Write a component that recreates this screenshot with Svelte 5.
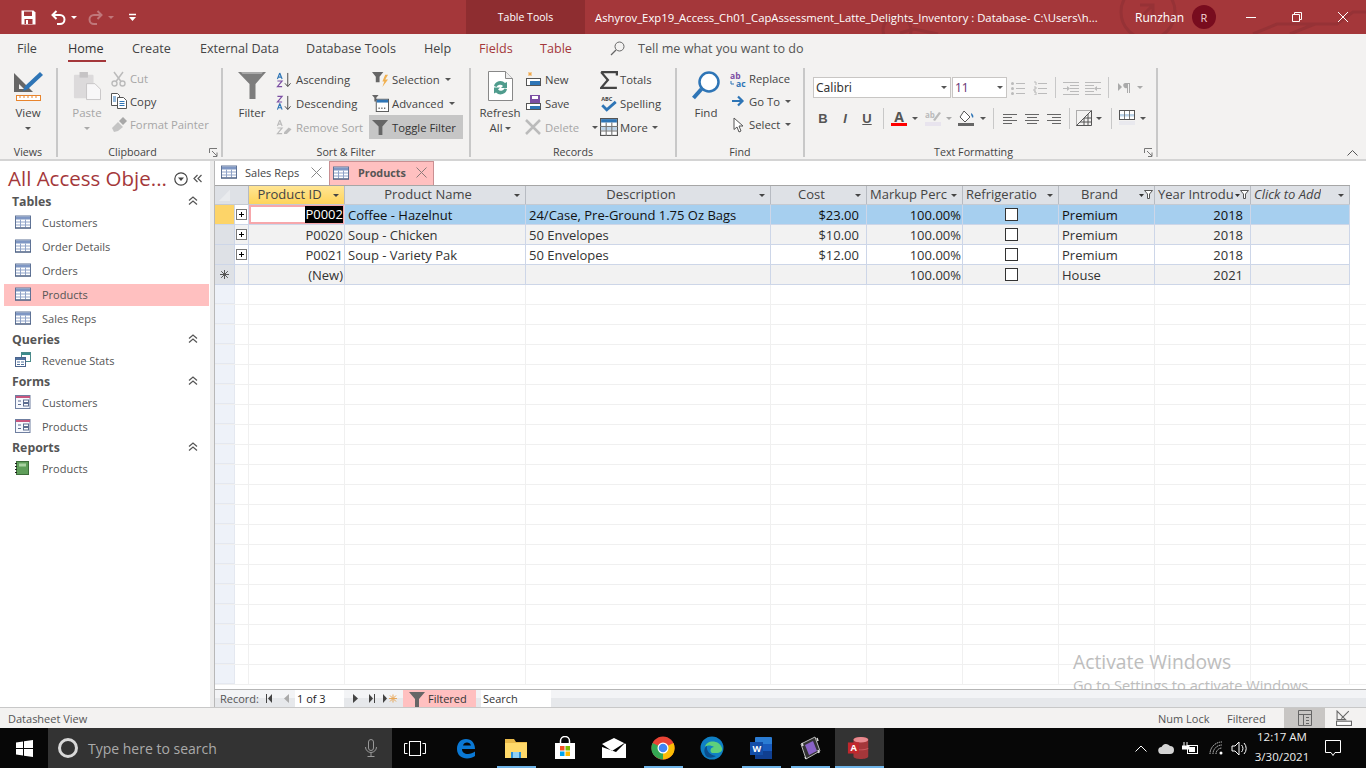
<script>
  const tabs = [
    ['File','t-file'],['Home','t-home active'],['Create','t-create'],['External Data','t-ext'],['Database Tools','t-db'],['Help','t-help'],['Fields','t-fields red'],['Table','t-table red']
  ];
  const nav = [
    { h:'Tables', items:[['Customers','t'],['Order Details','t'],['Orders','t'],['Products','t',true],['Sales Reps','t']] },
    { h:'Queries', items:[['Revenue Stats','q']] },
    { h:'Forms', items:[['Customers','f'],['Products','f']] },
    { h:'Reports', items:[['Products','r']] }
  ];
  const cols = [
    ['Product ID','c','hsel'],['Product Name','c'],['Description','c'],['Cost','c'],['Markup Perc','l'],['Refrigeratio','l'],['Brand','c','','f'],['Year Introdu','l','','f'],['Click to Add','i']
  ];
  const rows = [
    { cur:true, mark:'cur', exp:true, id:'P0002', name:'Coffee - Hazelnut', desc:'24/Case, Pre-Ground 1.75 Oz Bags', cost:'$23.00', brand:'Premium', yr:'2018' },
    { alt:true, exp:true, id:'P0020', name:'Soup - Chicken', desc:'50 Envelopes', cost:'$10.00', brand:'Premium', yr:'2018' },
    { exp:true, id:'P0021', name:'Soup - Variety Pak', desc:'50 Envelopes', cost:'$12.00', brand:'Premium', yr:'2018' },
    { alt:true, mark:'new', id:'(New)', name:'', desc:'', cost:'', brand:'House', yr:'2021' }
  ];
  const blanks = Array.from({length:20},(_, i)=>i);
</script>

{#snippet tableIcon()}
  <svg class="ico16" viewBox="0 0 16 13"><rect x=".5" y=".5" width="15" height="12" fill="#fff" stroke="#5f7396"/><rect x="1" y="1" width="14" height="3" fill="#7f97c4"/><path d="M1 6.5h14M1 9.5h14M5.5 4v8M10.5 4v8" stroke="#8fa3c8" fill="none"/><path d="M0 12.5h16" stroke="#44587a"/></svg>
{/snippet}
{#snippet navIcon(k)}
  {#if k==='t'}
    {@render tableIcon()}
  {:else if k==='q'}
    <svg class="ico16" viewBox="0 0 16 16"><rect x="6.5" y=".5" width="9" height="9" fill="#fff" stroke="#4a8a8a"/><rect x="7" y="1" width="8" height="2" fill="#3c8c8c"/><rect x=".5" y="5.5" width="10" height="9" fill="#fff" stroke="#4c648c"/><rect x="1" y="6" width="9" height="2" fill="#51729f"/><path d="M2 10h3M6 10h3M2 12.500h3M6 12.500h3" stroke="#51729f"/></svg>
  {:else if k==='f'}
    <svg class="ico16" viewBox="0 0 16 14"><rect x=".5" y=".5" width="14.500" height="13" fill="#f6f8fd" stroke="#6f7fa0"/><rect x="1" y="1" width="14" height="2" fill="#c8567f"/><path d="M3 6h3M3 9.500h3" stroke="#5d6d90"/><rect x="8.500" y="5" width="5" height="2.500" fill="#fff" stroke="#5d6d90"/><rect x="8.500" y="8.500" width="5" height="2.500" fill="#fff" stroke="#5d6d90"/></svg>
  {:else}
    <svg class="ico16" viewBox="0 0 16 14"><rect x="1.500" y=".5" width="12" height="13" fill="#5f9e5a" stroke="#3d6d3a"/><rect x="4" y="2.500" width="7" height="3" fill="#a9d3a2"/><path d="M1 2v1M1 5v1M1 8v1M1 11v1" stroke="#222" stroke-width="2" fill="none"/></svg>
  {/if}
{/snippet}
{#snippet funnel(c)}
  <svg class="fun" viewBox="0 0 16 16"><path d="M0 1h16L10 8v8H6V8z" fill={c}/></svg>
{/snippet}
{#snippet chev2()}
  <svg class="chev" viewBox="0 0 10 10"><path d="M1 4.500l4-3.500 4 3.500M1 8.500l4-3.500 4 3.500" fill="none" stroke="#555" stroke-width="1.200"/></svg>
{/snippet}
{#snippet launcher()}
  <svg class="launch" viewBox="0 0 9 9"><path d="M.5 5V.5H8M3 3l5 5M8 4.500V8.500H4" fill="none" stroke="#777"/></svg>
{/snippet}
{#snippet lines(a,c)}
  <svg class="ico14" viewBox="0 0 14 14">
    {#if a==='l'}<path d="M0 3.500h14M0 6.500h9M0 9.500h14M0 12.500h9" stroke={c}/>
    {:else if a==='c'}<path d="M0 3.500h14M2 6.500h10M0 9.500h14M2 12.500h10" stroke={c}/>
    {:else}<path d="M0 3.500h14M5 6.500h9M0 9.500h14M5 12.500h9" stroke={c}/>{/if}
  </svg>
{/snippet}

<div class="app">
  <header class="title">
    <svg class="pattern" viewBox="0 0 1366 34" aria-hidden="true">
      <g fill="none" stroke="#963236" stroke-width="3">
        <circle cx="1148" cy="12" r="27"/><path d="M1140 5h13v13M1153 5l-16 16"/>
        <circle cx="897" cy="30" r="14"/><path d="M900 33l14-4 24 5M1253 34l24-10h60l16-12h13M1290 34l25-10"/>
      </g>
    </svg>
    <div class="qat">
      <svg class="q-save" viewBox="0 0 15 15"><path d="M.5.5h12l2 2v12H.5z" fill="#fff"/><rect x="3" y="1.500" width="8" height="4.500" fill="#a4373a"/><rect x="3.500" y="9" width="8" height="5" fill="#a4373a"/><rect x="5" y="10" width="2" height="4" fill="#fff"/></svg>
      <svg class="q-undo" viewBox="0 0 15 15"><path d="M5.500 1L1.500 5l4 4M2 5h7a4.500 4.500 0 0 1 0 9H6" fill="none" stroke="#fff" stroke-width="2"/></svg>
      <span class="qc w"></span>
      <svg class="q-redo" viewBox="0 0 15 15"><path d="M9.500 1l4 4-4 4M13 5H6a4.500 4.500 0 0 0 0 9h3" fill="none" stroke="#c0777a" stroke-width="2"/></svg>
      <span class="qc d"></span>
      <svg class="q-more" viewBox="0 0 7 9"><path d="M0 1.500h7" stroke="#fff" stroke-width="1.500"/><path d="M0 4h7L3.500 8z" fill="#fff"/></svg>
    </div>
    <div class="tt">Table Tools</div>
    <div class="doc">Ashyrov_Exp19_Access_Ch01_CapAssessment_Latte_Delights_Inventory : Database- C:\Users\h...</div>
    <div class="user">Runzhan</div>
    <div class="avatar">R</div>
    <div class="win">
      <svg viewBox="0 0 10 10"><path d="M0 5.500h10" stroke="#fff"/></svg>
      <svg viewBox="0 0 10 10"><path d="M.5 2.500h7v7h-7zM2.500 2.500v-2h7v7h-2" fill="none" stroke="#fff"/></svg>
      <svg viewBox="0 0 10 10"><path d="M0 0l10 10M10 0L0 10" stroke="#fff"/></svg>
    </div>
  </header>

  <nav class="tabs">
    {#each tabs as t}<span class={t[1]}>{t[0]}</span>{/each}
    <svg class="tellico" viewBox="0 0 15 15"><circle cx="9.500" cy="5.500" r="4.500" fill="none" stroke="#666"/><path d="M6 9l-5 5" stroke="#666" stroke-width="1.300"/></svg>
    <span class="tell">Tell me what you want to do</span>
  </nav>

  <section class="ribbon">
    <div class="grp g-views">
      <div class="gbody">
        <div class="big b-view">
          <svg class="bigico" viewBox="0 0 30 30"><path d="M1 2v19h19z" fill="#666"/><path d="M6 13v5h5z" fill="#f3f2f1"/><path d="M12 15L27 1l3 3-15 14-5 2z" fill="#2e75b6"/><rect x="3.500" y="24.500" width="24" height="5" fill="#fff" stroke="#e8842c"/><path d="M7 25v2M11 25v2M15 25v2M19 25v2M23 25v2" stroke="#e8842c"/></svg>
          <span>View</span><i class="caret"></i>
        </div>
      </div>
      <div class="glabel">Views</div>
    </div>

    <div class="grp g-clip">
      <div class="gbody">
        <div class="big b-paste dis">
          <svg class="bigico" viewBox="0 0 30 30"><rect x="1" y="3" width="21" height="25" rx="1" fill="#dcdadb"/><rect x="7" y="0" width="9" height="6" fill="#c6c4c5"/><path d="M14.500 12.500h9l6 6v11h-15z" fill="#f8f7f8" stroke="#c6c4c5"/></svg>
          <span>Paste</span><i class="caret lt"></i>
        </div>
        <div class="col clipcol r23">
          <div class="sm dis"><svg class="ico16" viewBox="0 0 16 16"><circle cx="3.500" cy="12.500" r="2.500" fill="none" stroke="#bbb" stroke-width="1.400"/><circle cx="11.500" cy="12.500" r="2.500" fill="none" stroke="#bbb" stroke-width="1.400"/><path d="M5 10.500L12 1M10 10.500L3 1" stroke="#bbb" stroke-width="1.500"/></svg><span>Cut</span></div>
          <div class="sm"><svg class="ico16" viewBox="0 0 16 16"><path d="M.5.5h6l2 2v10h-8z" fill="#fff" stroke="#555"/><path d="M6.500 4.500h6l3 3v8h-9z" fill="#fff" stroke="#555"/><path d="M8.500 8.500h5M8.500 10.500h5M8.500 12.500h5M2 4h3M2 6h3M2 8h3" stroke="#2e75b6"/></svg><span>Copy</span></div>
          <div class="sm dis"><svg class="ico16" viewBox="0 0 16 16"><path d="M1 11l6-6 5 5-5 4-4 1z" fill="#c4c4c4"/><path d="M8 4l4-4 4 4-4 4z" fill="#a8a8a8"/></svg><span>Format Painter</span></div>
        </div>
      </div>
      <div class="glabel">Clipboard</div>
      <div class="launchwrap">{@render launcher()}</div>
    </div>

    <div class="grp g-sort">
      <div class="gbody">
        <div class="big b-filter">
          <svg class="bigico" viewBox="0 0 28 28"><path d="M0 0h28L17.500 12v15h-6V12z" fill="#7d7d7d"/><path d="M3 0h22l-1.500 2h-19z" fill="#a9a9a9"/></svg>
          <span>Filter</span>
        </div>
        <div class="col sortcol1 r24">
          <div class="sm az"><svg class="ico16" viewBox="0 0 16 17"><path d="M12 1v14M9 12l3 3.500 3-3.500" fill="none" stroke="#444"/><path d="M3.500 1L1 7.500M3.500 1L6 7.500M2 5.500h3" fill="none" stroke="#2e75b6" stroke-width="1.200"/><path d="M1 9.500h5L1 15.500h5" fill="none" stroke="#7b4ea3" stroke-width="1.200"/></svg><span>Ascending</span></div>
          <div class="sm az"><svg class="ico16" viewBox="0 0 16 17"><path d="M12 1v14M9 12l3 3.500 3-3.500" fill="none" stroke="#444"/><path d="M1 1.500h5L1 7.500h5" fill="none" stroke="#7b4ea3" stroke-width="1.200"/><path d="M3.500 9L1 15.500M3.500 9L6 15.500M2 13.500h3" fill="none" stroke="#2e75b6" stroke-width="1.200"/></svg><span>Descending</span></div>
          <div class="sm az dis"><svg class="ico16" viewBox="0 0 16 17"><path d="M3.500 1L1 7.500M3.500 1L6 7.500M2 5.500h3M1 9.500h5L1 15.500h5" fill="none" stroke="#bbb" stroke-width="1.200"/><path d="M8 14l5-5 3 2-5 5H8z" fill="#bbb"/></svg><span>Remove Sort</span></div>
        </div>
        <div class="col sortcol2 r24">
          <div class="sm"><svg class="ico16 wide" viewBox="0 0 18 18"><path d="M0 1h12L8 6v6H4V6z" fill="#666"/><path d="M14 4h3l-3 5h3l-6 8 2-6h-2z" fill="#f0b050"/></svg><span>Selection</span><i class="caret s"></i></div>
          <div class="sm"><svg class="ico16 wide" viewBox="0 0 18 18"><path d="M0 0h7L4.500 3v4h-2V3z" fill="#666"/><rect x="4.500" y="4.500" width="13" height="13" fill="#fff" stroke="#555"/><rect x="5" y="5" width="12" height="3" fill="#2e75b6"/><path d="M7 14h1M10 14h1M13 14h1" stroke="#333" stroke-width="1.500"/></svg><span>Advanced</span><i class="caret s"></i></div>
          <div class="sm on"><svg class="ico16 wide" viewBox="0 0 18 16"><path d="M0 0h17l-6 7v9H7V7z" fill="#666"/></svg><span>Toggle Filter</span></div>
        </div>
      </div>
      <div class="glabel">Sort &amp; Filter</div>
    </div>

    <div class="grp g-rec">
      <div class="gbody">
        <div class="big b-refresh">
          <svg class="bigico" viewBox="0 0 26 30"><path d="M1.500.5h17l7 7v22H1.500z" fill="#fff" stroke="#888"/><path d="M18.500.5v7h7" fill="#eee" stroke="#888"/><path d="M7 15a6.500 6.500 0 0 1 11-3l2-1v6h-6l2-2a4 4 0 0 0-6.500 1zM20 18a6.500 6.500 0 0 1-11 3.500l-2 1v-6h6l-2 2a4 4 0 0 0 6.500-1z" fill="#4f9c8d"/></svg>
          <span>Refresh</span><span class="all">All<i class="caret s"></i></span>
        </div>
        <div class="col reccol1 r24">
          <div class="sm gap4"><svg class="ico16" viewBox="0 0 16 16"><path d="M5 0v4M3 2h4M3.500 .5l3 3M6.500 .5l-3 3" stroke="#f0a84a"/><rect x="1.500" y="6.500" width="14" height="7" fill="#fff" stroke="#555"/><rect x="5" y="9" width="10" height="4" fill="#2e75b6"/></svg><span>New</span></div>
          <div class="sm gap4"><svg class="ico16" viewBox="0 0 16 16"><rect x="5" y="0" width="10" height="10" fill="#7b4ea3"/><rect x="7" y="1" width="6" height="3" fill="#fff"/><rect x="1.500" y="8.500" width="14" height="6" fill="#fff" stroke="#555"/><rect x="5" y="11" width="10" height="3" fill="#2e75b6"/></svg><span>Save</span></div>
          <div class="sm gap4 dis"><svg class="ico16" viewBox="0 0 16 16"><path d="M1 1l14 14M15 1L1 15" stroke="#bbb" stroke-width="2.500"/></svg><span>Delete</span><i class="caret s del"></i></div>
        </div>
        <div class="col reccol2 r24">
          <div class="sm gap2"><svg class="ico18" viewBox="0 0 16 16"><path d="M1 1h14v3M15 15H1l6-7-6-7" fill="none" stroke="#444" stroke-width="2"/></svg><span>Totals</span></div>
          <div class="sm gap2"><svg class="ico18" viewBox="0 0 16 16"><text x="1" y="6" class="abc">ABC</text><path d="M2 10l4 4 8-7" fill="none" stroke="#2e75b6" stroke-width="2.500"/></svg><span>Spelling</span></div>
          <div class="sm gap2"><svg class="ico18" viewBox="0 0 16 16"><rect x=".5" y=".5" width="15" height="15" fill="#fff" stroke="#555"/><rect x="1" y="1" width="14" height="3" fill="#2e75b6"/><rect x="1" y="7" width="14" height="4" fill="#bcd3e8"/><path d="M5.500 4v12M10.500 4v12M0 7.500h16M0 11.500h16" stroke="#777"/></svg><span>More</span><i class="caret s"></i></div>
        </div>
      </div>
      <div class="glabel">Records</div>
    </div>

    <div class="grp g-find">
      <div class="gbody">
        <div class="big b-find">
          <svg class="bigico" viewBox="0 0 28 30"><circle cx="17" cy="11" r="9.500" fill="#fff" stroke="#2e75b6" stroke-width="2.500"/><path d="M9.500 18L1.500 27" stroke="#2e75b6" stroke-width="4"/></svg>
          <span>Find</span>
        </div>
        <div class="col findcol r23">
          <div class="sm"><svg class="ico16" viewBox="0 0 16 16"><text x="0" y="8" class="ab">ab</text><text x="6" y="15.500" class="ac">ac</text><path d="M1 10v3h3" fill="none" stroke="#2e75b6"/></svg><span>Replace</span></div>
          <div class="sm"><svg class="ico16" viewBox="0 0 16 16"><path d="M2 8h10M8 3.500L12.500 8 8 12.500" fill="none" stroke="#2e75b6" stroke-width="2.200"/></svg><span>Go To</span><i class="caret s"></i></div>
          <div class="sm"><svg class="ico16" viewBox="0 0 16 16"><path d="M4 1v11.500l3-2.500 2 5 2-1-2-5h4z" fill="#fff" stroke="#555"/></svg><span>Select</span><i class="caret s"></i></div>
        </div>
      </div>
      <div class="glabel">Find</div>
    </div>

    <div class="grp g-text">
      <div class="gbody tf">
        <div class="tfr1">
          <div class="sel fontsel"><span>Calibri</span><i class="caret s"></i></div>
          <div class="sel sizesel"><span>11</span><i class="caret s"></i></div>
          <span class="cell"><svg class="ico14" viewBox="0 0 14 14"><path d="M5 2.500h9M5 7.500h9M5 12.500h9" stroke="#bbb"/><circle cx="1.500" cy="2.500" r="1.500" fill="#bbb"/><circle cx="1.500" cy="7.500" r="1.500" fill="#bbb"/><circle cx="1.500" cy="12.500" r="1.500" fill="#bbb"/></svg></span>
          <span class="cell"><svg class="ico14" viewBox="0 0 14 14"><path d="M5 2.500h9M5 7.500h9M5 12.500h9M1 1h2v3M1 6h2v2H1v2h2M1 11h2v3H1" fill="none" stroke="#bbb"/></svg></span>
          <span class="cell"><b class="vsep"></b></span>
          <span class="cell"><svg class="ico16" viewBox="0 0 16 14"><path d="M0 1.500h16M7 4.500h9M7 7.500h9M7 10.500h9M0 13.500h16" stroke="#bbb"/><path d="M0 7h4v-2l3 2.500L4 10V8H0z" fill="#bbb"/></svg></span>
          <span class="cell"><svg class="ico16" viewBox="0 0 16 14"><path d="M0 1.500h16M0 4.500h9M0 7.500h9M0 10.500h9M0 13.500h16" stroke="#bbb"/><path d="M16 7h-4v-2L9 7.500 12 10V8h4z" fill="#bbb"/></svg></span>
          <span class="cell"><b class="vsep"></b></span>
          <span class="cell"><svg class="ico12" viewBox="0 0 12 12"><path d="M0 1l4 4-4 4zM7 1h5v10h-1V2h-1v9H9V6a2.500 2.500 0 0 1-2-5z" fill="#aaa"/></svg></span>
          <span class="cell"><i class="caret s lt"></i></span>
        </div>
        <div class="tfr2">
          <span class="cell tb">B</span><span class="cell ti">I</span><span class="cell tu">U</span>
          <span class="cell"><b class="vsep"></b></span>
          <span class="cell fa"><span>A</span><b class="redbar"></b></span>
          <span class="cell"><i class="caret s z"></i></span>
          <span class="cell"><svg class="ico16" viewBox="0 0 16 16"><text x="0" y="8" class="abg">ab</text><path d="M8 10l6-8 2 1-6 8z" fill="#bbb"/><rect x="0" y="12" width="16" height="4" fill="#e8e4ee"/></svg></span>
          <span class="cell"><i class="caret s lt"></i></span>
          <span class="cell"><svg class="ico16" viewBox="0 0 16 16"><path d="M6 1l6 6-5 5-5-5z" fill="#fff" stroke="#555"/><path d="M13 3c2 1 3 3 2 5-1-1-2-2-2-5z" fill="#2e75b6"/><rect x="0" y="13" width="16" height="3" fill="#666"/></svg></span>
          <span class="cell"><i class="caret s z"></i></span>
          <span class="cell"><b class="vsep"></b></span>
          <span class="cell">{@render lines('l','#666')}</span>
          <span class="cell">{@render lines('c','#666')}</span>
          <span class="cell">{@render lines('r','#666')}</span>
          <span class="cell"><b class="vsep"></b></span>
          <span class="cell"><svg class="ico16" viewBox="0 0 16 16"><path d="M.5 15.500v-15h15" fill="none" stroke="#666" stroke-dasharray="1 1"/><path d="M.5 15.500L15.500 .5v15zM8 8v7.500M12 4v11.500M4 12h11.500M8 8h7.500" fill="none" stroke="#555"/></svg></span>
          <span class="cell"><i class="caret s z"></i></span>
          <span class="cell"><b class="vsep"></b></span>
          <span class="cell"><svg class="ico16" viewBox="0 0 16 16"><rect x=".5" y=".5" width="15" height="9" fill="#fff" stroke="#555"/><rect x="1" y="4" width="14" height="2.500" fill="#bcd3e8"/><path d="M5.500 1v8M10.500 1v8" stroke="#777"/><rect y="11" width="16" height="4" fill="#e9e9ee"/></svg></span>
          <span class="cell"><i class="caret s z"></i></span>
        </div>
      </div>
      <div class="glabel">Text Formatting</div>
      <div class="launchwrap">{@render launcher()}</div>
    </div>
    <svg class="collapse" viewBox="0 0 11 6"><path d="M.5 5.500L5.500 .5l5 5" fill="none" stroke="#555"/></svg>
  </section>

  <main class="body">
    <aside class="nav">
      <div class="navhead">
        <span class="navtitle">All Access Obje...</span>
        <svg class="navdd" viewBox="0 0 14 14"><circle cx="7" cy="7" r="6.200" fill="none" stroke="#444" stroke-width="1.200"/><path d="M4 5.500h6L7 9z" fill="#444"/></svg>
        <svg class="navcol" viewBox="0 0 9 9"><path d="M4.500 1L1 4.500 4.500 8M8.500 1L5 4.500 8.500 8" fill="none" stroke="#555" stroke-width="1.200"/></svg>
      </div>
      {#each nav as s}
        <div class="navsec"><span>{s.h}</span>{@render chev2()}</div>
        {#each s.items as it}
          <div class={['navitem', it[2] && 'act']}>{@render navIcon(it[1])}<span>{it[0]}</span></div>
        {/each}
      {/each}
    </aside>
    <div class="split"></div>
    <div class="docarea">
      <div class="doctabs">
        <div class="dtab plain">{@render tableIcon()}<span>Sales Reps</span><svg class="x" viewBox="0 0 11 11"><path d="M.5.5l10 10M10.500.5l-10 10" stroke="#888"/></svg></div>
        <div class="dtab pink">{@render tableIcon()}<span>Products</span><svg class="x" viewBox="0 0 11 11"><path d="M.5.5l10 10M10.500.5l-10 10" stroke="#8c7a7a"/></svg></div>
      </div>
      <div class="sheet">
        <div class="gr head">
          <div class="hc corner"><svg viewBox="0 0 14 14"><path d="M14 1v13H1z" fill="#e9ebee"/></svg></div>
          <div class="hc blank"></div>
          {#each cols as c}
            <div class={['hc', c[1]==='c'&&'ctr', c[1]==='i'&&'ital', c[2]]}>
              <span class="ht">{c[0]}</span>
              {#if c[3]}
                <svg class="hf" viewBox="0 0 14 11"><path d="M5.500 1.500h8L10.500 5v4.500h-2V5z" fill="#fff" stroke="#555"/><path d="M0 5h5L2.500 8z" fill="#333"/></svg>
              {:else}
                <i class="harr"></i>
              {/if}
            </div>
          {/each}
        </div>
        {#each rows as r}
          <div class={['gr','row', r.cur&&'cur', r.alt&&'alt']}>
            <div class={['sc', r.cur&&'selmark']}>
              {#if r.mark==='new'}<svg class="ast" viewBox="0 0 9 9"><path d="M4.500 0v9M0 4.500h9M1.200 1.200l6.600 6.600M7.800 1.200L1.200 7.800" stroke="#555"/></svg>{/if}
            </div>
            <div class="xc">{#if r.exp}<span class="plus"><svg viewBox="0 0 9 9"><path d="M2 4.500h5M4.500 2v5" stroke="#000"/></svg></span>{/if}</div>
            <div class={['cell-g','rt','id', r.cur&&'focus']}>{#if r.cur}<span class="hl">{r.id}</span>{:else}{r.id}{/if}</div>
            <div class="cell-g">{r.name}</div>
            <div class="cell-g">{r.desc}</div>
            <div class="cell-g rt r8">{r.cost}</div>
            <div class="cell-g rt r2">100.00%</div>
            <div class="cell-g ctrx"><span class="cb"></span></div>
            <div class="cell-g">{r.brand}</div>
            <div class="cell-g rt r8">{r.yr}</div>
            <div class="cell-g"></div>
          </div>
        {/each}
        {#each blanks as b}
          <div class="gr blankrow">
            <div class="sb"></div>
            {#each Array(10) as _}<div class="bc"></div>{/each}
          </div>
        {/each}
        <div class="wm"><div class="wm1">Activate Windows</div><div class="wm2">Go to Settings to activate Windows.</div></div>
      </div>
      <div class="recbar">
        <span class="rlabel">Record:</span>
        <svg class="ri first" viewBox="0 0 7 9"><path d="M.5 0v9" stroke="#444"/><path d="M6 0v9L2 4.500z" fill="#444"/></svg>
        <svg class="ri prev" viewBox="0 0 5 9"><path d="M5 0v9L0 4.500z" fill="#aaa"/></svg>
        <div class="recinput">1 of 3</div>
        <svg class="ri next" viewBox="0 0 5 9"><path d="M0 0v9l5-4.500z" fill="#444"/></svg>
        <svg class="ri last" viewBox="0 0 7 9"><path d="M0 0v9l4-4.500z" fill="#444"/><path d="M5.500 0v9" stroke="#444"/></svg>
        <svg class="ri newr" viewBox="0 0 14 9"><path d="M0 0v9l4-4.500z" fill="#444"/><path d="M10 .5v8M6 4.500h8M7 1.500l6 6M13 1.500l-6 6" stroke="#e8a85a"/></svg>
        <div class="filt">{@render funnel('#666')}<span>Filtered</span></div>
        <div class="search">Search</div>
      </div>
    </div>
  </main>

  <footer class="status">
    <span class="sl">Datasheet View</span>
    <span class="numlock">Num Lock</span>
    <span class="stf">Filtered</span>
    <span class="viewbtn"><svg class="ico16" viewBox="0 0 14 16"><path d="M.5.500h13v15H.5zM.5 4.500h13M5.500 4.500v11M8 7.500h3M8 10.500h3M8 13.500h3" fill="none" stroke="#666"/></svg></span>
    <span class="viewbtn2"><svg class="ico16" viewBox="0 0 15 15"><path d="M1 1v8h8zM5 8l7-7" fill="none" stroke="#666"/><rect x=".5" y="10.500" width="14" height="4" fill="#fff" stroke="#666"/></svg></span>
  </footer>

  <div class="taskbar">
    <svg class="tstart" viewBox="0 0 17 17"><path d="M0 2.500l7-1v6.500H0zM8 1.300L17 0v8H8zM0 9h7v6.500l-7-1zM8 9h9v8l-9-1.300z" fill="#fff"/></svg>
    <div class="tsearch">
      <span class="cortana"></span>
      <span class="tsq">Type here to search</span>
      <svg class="mic" viewBox="0 0 12 18"><rect x="3.500" y=".5" width="5" height="11" rx="2.500" fill="none" stroke="#999"/><path d="M.5 8a5.500 5.500 0 0 0 11 0M6 13.500V17M2.500 17.500h7" fill="none" stroke="#999"/></svg>
    </div>
    <div class="tbi tv"><svg viewBox="0 0 22 15"><rect x="5.500" y=".5" width="11" height="14" fill="none" stroke="#fff"/><path d="M3.500 2.500h-3v10h3M18.500 2.500h3v10h-3" fill="none" stroke="#fff"/></svg></div>
    <div class="tbi first-app"><svg viewBox="0 0 24 24"><path d="M4 13h16c0-6-3.500-10-9-10S2 7 2 13c0 6 4.500 9.500 10 9.500 3 0 6-1 8-2.500v-4.500c-2 1.500-4.500 2.500-7 2.500-3.500 0-6-1.500-6-5zM8 9.500c.5-2 2-3 4-3s3.500 1 4 3z" fill="#0a78d4" fill-rule="evenodd"/></svg></div>
    <div class="tbi run"><svg viewBox="0 0 24 22"><path d="M1 2h9l2 3h11v3H1z" fill="#e9b949"/><rect x="1" y="6" width="22" height="15" fill="#ffd96a"/><path d="M7 21v-6h10v6z" fill="#2b8fd6"/><rect x="9" y="15" width="6" height="6" fill="#8fd0f5"/></svg></div>
    <div class="tbi"><svg viewBox="0 0 24 24"><path d="M7.500 7V5a4.500 4.500 0 0 1 9 0v2" fill="none" stroke="#fff" stroke-width="1.500"/><rect x="2" y="7" width="20" height="16" fill="#fff"/><rect x="7" y="10" width="4.500" height="4.500" fill="#f25022"/><rect x="12.500" y="10" width="4.500" height="4.500" fill="#7fba00"/><rect x="7" y="15.500" width="4.500" height="4.500" fill="#00a4ef"/><rect x="12.500" y="15.500" width="4.500" height="4.500" fill="#ffb900"/></svg></div>
    <div class="tbi"><svg viewBox="0 0 24 20"><path d="M0 6L12 0l12 6v14H0z" fill="#fff"/><path d="M0 6l10 7L24 4 14 14 0 9z" fill="#000"/></svg></div>
    <div class="tbi run"><svg viewBox="0 0 24 24"><circle cx="12" cy="12" r="11.500" fill="#ea4335"/><path d="M12 12L22.500 7A11.500 11.500 0 0 1 12 23.500z" fill="#fbbc05"/><path d="M12 12L12 23.500A11.500 11.500 0 0 1 1.500 7z" fill="#34a853"/><circle cx="12" cy="12" r="5.500" fill="#fff"/><circle cx="12" cy="12" r="4.300" fill="#4285f4"/></svg></div>
    <div class="tbi"><svg viewBox="0 0 24 24"><circle cx="12" cy="12" r="11.500" fill="#0f7fc4"/><path d="M5 11c1-7 14-8 17 1 1 3-2 5-6 5h-4c-3-2-1-6 2-6-3-2-7-2-9 0z" fill="#5ed07c"/><path d="M7 21c-4-4-3-10 0-11-1 5 3 9 9 10-3 2-6 2-9 1z" fill="#0b4e8c"/></svg></div>
    <div class="tbi run"><svg viewBox="0 0 24 24"><rect x="6" y="1" width="17" height="22" rx="1" fill="#2b7cd3"/><rect x="6" y="8" width="17" height="7" fill="#185abd"/><rect x="6" y="15" width="17" height="8" fill="#103f91"/><rect x="1" y="6" width="13" height="13" fill="#134ea8"/><text x="3.500" y="16" class="wl">W</text></svg></div>
    <div class="tbi run"><svg viewBox="0 0 24 24"><path d="M3 8L17 1l5 14-14 8z" fill="#333" stroke="#bbb"/><path d="M7 9l8-4 4 10-8 4z" fill="#8a63c7"/><path d="M4 7l1 3M19 2l1 3M7 21l1 2M20 14l1 3" stroke="#ddd" stroke-width="1.500"/></svg></div>
    <div class="tbi act"><svg viewBox="0 0 26 26"><path d="M7 4c0-4 16-4 16 0v18c0 4-16 4-16 0z" fill="#a4373a"/><ellipse cx="15" cy="4" rx="8" ry="3" fill="#e88a8f"/><path d="M7 14c4 2 12 2 16 0v-1c-4 2-12 2-16 0z" fill="#c9595e"/><rect x="1" y="7" width="12" height="12" fill="#c1272d"/><text x="3.700" y="16.500" class="al">A</text></svg></div>
    <div class="tray">
      <svg class="up" viewBox="0 0 12 7"><path d="M.5 6.500L6 1l5.500 5.500" fill="none" stroke="#fff"/></svg>
      <svg class="cl" viewBox="0 0 16 11"><path d="M4 11a3.500 3.500 0 0 1-.5-7A5 5 0 0 1 12 3a4 4 0 0 1 0 8z" fill="#d4d4d4"/></svg>
      <svg class="bat" viewBox="0 0 16 13"><path d="M2 0v4M5 0v4M0 4h7v3H0z" fill="#fff" stroke="#fff"/><rect x="5.500" y="3.500" width="10" height="8" fill="none" stroke="#fff"/><rect x="7" y="5" width="6" height="5" fill="#fff"/></svg>
      <svg class="wifi" viewBox="0 0 14 14"><path d="M1 13A12 12 0 0 1 13 1M4 13a9 9 0 0 1 9-9M7 13a6 6 0 0 1 6-6" fill="none" stroke="#ccc" stroke-dasharray="1.500 .7"/><circle cx="12" cy="12" r="1.500" fill="#fff"/></svg>
      <svg class="vol" viewBox="0 0 16 15"><path d="M1 5h3l4-4v13l-4-4H1z" fill="none" stroke="#fff"/><path d="M10.500 4a5 5 0 0 1 0 7M13 2a8 8 0 0 1 0 11" fill="none" stroke="#fff"/></svg>
      <div class="clock"><span>12:17 AM</span><span>3/30/2021</span></div>
      <svg class="notif" viewBox="0 0 16 16"><path d="M.5.500h15v12H10l-2 3-2-3H.5z" fill="none" stroke="#fff"/></svg>
    </div>
  </div>
</div>

<style>
  :global(body){margin:0;background:#fff;overflow:hidden}
  .app{width:1366px;height:768px;display:flex;flex-direction:column;font-family:"Open Sans","Noto Sans",sans-serif;font-size:12px;color:#444;overflow:hidden}
  svg{display:block;flex:none}
  .ico16{width:16px;height:16px}
  .ico16.wide{width:17px;height:17px}
  .ico18{width:18px;height:18px}
  .ico14{width:14px;height:14px}
  .ico12{width:12px;height:12px}

  /* title */
  .title{height:34px;flex:none;background:#a4373a;display:flex;align-items:center;color:#fff;position:relative;overflow:hidden}
  .pattern{position:absolute;left:0;top:0;width:1366px;height:34px}
  .title>*:not(.pattern){position:relative}
  .qat{width:466px;flex:none;display:flex;align-items:center;padding-left:21px;box-sizing:border-box}
  .q-save{width:15px;height:15px}
  .q-undo{width:15px;height:15px;margin-left:15px}
  .qc{border:3px solid transparent;border-top:3px solid #fff;border-bottom:0;margin-left:5px;width:0}
  .qc.d{border-top-color:#c0777a}
  .q-redo{width:15px;height:15px;margin-left:11px}
  .q-more{width:7px;height:9px;margin-left:15px}
  .tt{width:119px;height:34px;background:#8e2d30;display:flex;align-items:center;justify-content:center;font-size:10.500px;flex:none}
  .doc{margin-left:10px;width:540px;font-size:11.300px;white-space:nowrap;flex:none}
  .user{font-size:12px;width:57px;flex:none}
  .avatar{width:24px;height:24px;border-radius:50%;background:#780c1e;font-size:11px;color:#f2d6d6;display:flex;align-items:center;justify-content:center;flex:none}
  .win{display:flex;align-items:center;gap:36px;margin-left:30px}
  .win svg{width:10px;height:10px}

  /* tabs */
  .tabs{height:28px;flex:none;background:#f3f2f1;display:flex;align-items:center;font-size:12.600px;position:relative;color:#444}
  .tabs>span{display:block;line-height:28px;white-space:nowrap;padding-top:2px}
  .t-file{margin-left:17px;width:51px}
  .t-home{width:64px;position:relative;color:#333}
  .t-home::after{content:"";position:absolute;left:0;top:27px;width:38px;height:2px;background:#a4373a}
  .t-create{width:68px}
  .t-ext{width:106px}
  .t-db{width:118px}
  .t-help{width:55px}
  .t-fields{width:61px}
  .t-table{width:70px}
  .red{color:#a4373a}
  .tellico{width:15px;height:15px;margin-top:1px}
  .tell{margin-left:13px;color:#555}

  /* ribbon */
  .ribbon{height:99px;flex:none;box-sizing:border-box;background:#f3f2f1;border-bottom:2px solid #d4d4d4;display:flex;padding-top:6px;position:relative}
  .grp{height:89px;box-sizing:border-box;border-right:2px solid #c8c8c8;display:flex;flex-direction:column;flex:none;position:relative}
  .g-views{width:58px}
  .g-clip{width:165px}
  .g-sort{width:248px}
  .g-rec{width:206px}
  .g-find{width:128px}
  .g-text{width:353px}
  .g-clip .glabel{padding-right:14px}
  .g-text .glabel{padding-right:14px}
  .gbody{height:77px;display:flex;flex:none}
  .glabel{text-align:center;font-size:10.700px;line-height:14px;color:#444;white-space:nowrap}
  .launchwrap{position:absolute;right:3px;bottom:0}
  .launch{width:9px;height:9px}
  .big{display:flex;flex-direction:column;align-items:center;padding-top:3px;flex:none;line-height:16px;white-space:nowrap;font-size:11.500px}
  .bigico{width:28px;height:30px;margin-bottom:4px}
  .b-view{width:56px}
  .b-view .bigico{width:30px}
  .b-paste{width:36px;margin-left:11px}
  .b-filter{width:30px;margin-left:14px}
  .b-refresh{width:40px;margin-left:9px}
  .b-refresh .bigico{width:26px}
  .b-find{width:30px;margin-left:14px}
  .caret{display:block;width:0;border:3px solid transparent;border-top:3.5px solid #555;border-bottom:0;margin-top:6px}
  .caret.lt{border-top-color:#aaa}
  .caret.s{margin:0 0 0 2px}
  .caret.s.lt,.caret.s.z{margin:0}
  .caret.del{margin-left:9px}
  .all{display:flex;align-items:center;margin-top:-1px}
  .dis{color:#a6a6a6}
  .col{display:grid;flex:none}
  .r24{grid-template-rows:23px 24px 24px}
  .r23{grid-template-rows:21px 24px 23px}
  .sm{display:flex;align-items:center;gap:3px;white-space:nowrap;font-size:11.300px}
  .sm.az{gap:4px}
  .gap4{gap:4px}
  .gap2{gap:2px}
  .clipcol{margin-left:6px}
  .sortcol1{margin-left:9px;width:93px}
  .sortcol2{width:94px}
  .sortcol2 .sm{padding-left:3px}
  .on{background:#c6c6c6;color:#333}
  .reccol1{margin-left:5px;width:75px}
  .findcol{margin-left:9px}
  .abc{font:700 5px "Open Sans",sans-serif;fill:#444}
  .ab{font:700 8.500px "Open Sans",sans-serif;fill:#7b4ea3}
  .ac{font:700 8.500px "Open Sans",sans-serif;fill:#2e75b6}
  .abg{font:700 8px "Open Sans",sans-serif;fill:#bbb}

  .tf{flex-direction:column;padding:9px 0 0 8px;box-sizing:border-box}
  .tfr1,.tfr2{display:grid;align-items:center}
  .cell{display:flex;align-items:center;justify-content:center;height:100%;min-width:0}
  .tfr1{height:21px;grid-template-columns:138px 56px 22px 22px 8px 24px 20px 10px 22px 10px}
  .tfr2{height:22px;margin-top:9px;margin-left:-1px;grid-template-columns:22px 22px 22px 10px 22px 10px 25px 8px 26px 8px 12px 22px 22px 22px 8px 22px 8px 16px 16px 16px}
  .sel{height:21px;box-sizing:border-box;border:1px solid #c8c6c4;background:#fff;display:flex;align-items:center;justify-content:space-between;padding:0 3px 0 2px;color:#333;font-family:"Noto Sans",sans-serif}
  .sizesel{margin-left:1px;width:55px;border-color:#c8c6c4}
  .sizesel span{color:#6b3a78}
  .vsep{display:block;width:1px;height:21px;background:#c8c8c8}
  .tb{font-weight:700;color:#555;font-family:"Liberation Sans",sans-serif;font-size:13px}
  .ti{font-style:italic;color:#555;font-family:"Liberation Sans",sans-serif;font-size:13px;font-weight:700}
  .tu{text-decoration:underline;color:#555;font-family:"Liberation Sans",sans-serif;font-weight:700;font-size:13px}
  .fa{flex-direction:column;color:#555;font-weight:700;font-size:14px;line-height:12px}
  .redbar{display:block;width:16px;height:3px;background:#f00}
  .collapse{position:absolute;left:1347px;top:88px;width:11px;height:6px}

  /* body */
  .body{flex:1;display:flex;min-height:0}
  .nav{width:210px;flex:none;background:#fff;color:#555}
  .navhead{height:31px;display:flex;align-items:center;padding-left:8px;padding-top:2px;box-sizing:border-box}
  .navtitle{font-size:20.500px;color:#a4373a;width:166px;white-space:nowrap}
  .navdd{width:14px;height:14px;margin-top:2px}
  .navcol{width:9px;height:9px;margin:2px 0 0 5px}
  .navsec{height:18px;display:flex;align-items:center;justify-content:space-between;padding:0 12px;font-weight:700;font-size:12.300px;color:#555}
  .chev{width:10px;height:10px}
  .navitem{height:24px;display:flex;align-items:center;font-size:11px;gap:11px;margin-left:4px;padding-left:11px;margin-right:1px;color:#555}
  .navitem.act{background:#ffc0c0;height:22px;margin-top:2px;padding-bottom:2px;box-sizing:border-box}
  .split{width:4px;background:#ececec;flex:none}
  .docarea{flex:1;display:flex;flex-direction:column;min-width:0}
  .doctabs{height:24px;display:flex;flex:none;background:#fff;border-left:1px solid #b8b8b8;box-sizing:border-box}
  .dtab{display:flex;align-items:center;box-sizing:border-box;font-size:11px;flex:none;padding-bottom:2px}
  .dtab.plain{width:113px;padding-left:6px}
  .dtab.plain span{margin-left:8px;width:66px}
  .dtab.pink{width:105px;margin-left:1px;height:24px;background:#ffc0c0;border:1px solid #c98f92;border-bottom:0;padding-left:3px;font-weight:700;font-size:10.800px;color:#555}
  .dtab.pink span{margin-left:9px;width:58px}
  .dtab .x{width:11px;height:11px}
  .sheet{flex:1;position:relative;overflow:hidden;background:#fff;border-left:1px solid #b8b8b8;min-height:0}
  .gr{display:grid;grid-template-columns:20px 14px 96px 181px 245px 96px 96px 96px 96px 96px 99px;height:20px;box-sizing:border-box}
  .head{background:#dee1e6;border-top:1px solid #a6a6a6;border-bottom:1px solid #c5cad2;width:1135px}
  .hc{border-right:1px solid #b7bbc2;display:flex;align-items:center;padding:0 3px 2px;position:relative;white-space:nowrap;overflow:hidden;font-size:13px;color:#444;min-width:0}
  .hc.ctr{justify-content:center;padding-right:17px}
  .ht{overflow:hidden;display:block;max-width:77px;font-family:"Open Sans",sans-serif}
  .ctr .ht{max-width:none}
  .ital .ht{font-style:italic;max-width:none}
  .hc.hsel{background:linear-gradient(#ffe594,#ffd45a)}
  .harr{position:absolute;right:5px;top:8px;width:0;border:3px solid transparent;border-top:3.500px solid #444;border-bottom:0}
  .hf{position:absolute;right:1px;top:3px;width:14px;height:11px}
  .corner{padding:0;background:#dee1e6;border-right:0}
  .corner svg{width:12px;height:12px;margin-left:3px}
  .row{border-bottom:1px solid #cdd6e8;width:1135px;font-size:13px;color:#333;font-family:"Open Sans",sans-serif}
  .row.alt{background:#f2f2f2}
  .row.cur{background:#a6cfef;color:#111}
  .sc{background:#dee1e6;border-right:1px solid #cdd6e8;display:flex;align-items:center;justify-content:center}
  .selmark{background:#fdd468}
  .ast{width:9px;height:9px}
  .xc{background:#fff;border-right:1px solid #cdd6e8;display:flex;align-items:center;justify-content:center}
  .row.alt .xc{background:transparent}
  .row.cur .xc{background:#fff}
  .plus{display:block;width:9px;height:9px;border:1px solid #777;background:#fff}
  .plus svg{width:9px;height:9px}
  .cell-g{border-right:1px solid #cdd6e8;padding:0 3px;white-space:nowrap;overflow:hidden;line-height:20px;min-width:0}
  .rt{text-align:right}
  .id{padding-right:1px}
  .r8{padding-right:7px}
  .r2{padding-right:1px}
  .ctrx{display:flex;align-items:center;justify-content:center}
  .cb{display:block;width:13px;height:13px;box-sizing:border-box;border:1px solid #333;background:#fff;margin:-1px 0 0 1px}
  .focus{background:#fff;box-shadow:inset 0 0 0 2px #f7a7ab;line-height:19px}
  .hl{background:#000;color:#fff;display:inline-block;line-height:17px}
  .blankrow{border-bottom:1px solid #f0f0f0}
  .sb{background:#eef2f9;border-right:1px solid #e4e8f0;border-bottom:1px solid #e4e8f0}
  .bc{border-right:1px solid #f0f0f0}
  .wm{position:absolute;left:858px;top:464px;color:#bdbdbd;white-space:nowrap;font-family:"Open Sans",sans-serif}
  .wm1{font-size:19.300px;line-height:26px}
  .wm2{font-size:14.600px;line-height:20px}
  .recbar{height:18px;flex:none;background:linear-gradient(#f3f4f6 50%,#e6e8eb 50%);border-top:1px solid #b5b5b5;border-left:1px solid #b8b8b8;box-sizing:border-box;display:flex;align-items:center;font-size:11px;color:#555}
  .rlabel{margin-left:5px;width:46px}
  .ri{height:9px}
  .first{width:7px}
  .prev{width:5px;margin-left:11px}
  .recinput{width:49px;height:17px;background:#fff;margin-left:6px;padding-left:2px;box-sizing:border-box;color:#222;line-height:17px}
  .next{width:5px;margin-left:9px}
  .last{width:7px;margin-left:11px}
  .newr{width:14px;margin-left:7px}
  .filt{width:73px;height:17px;margin-left:6px;background:#ffc0c0;display:flex;align-items:center;padding-left:6px;box-sizing:border-box;gap:3px;color:#333}
  .fun{width:16px;height:16px}
  .search{width:70px;height:17px;margin-left:5px;background:#fff;padding-left:2px;box-sizing:border-box;color:#333;line-height:17px}

  /* status */
  .status{height:21px;flex:none;background:#f3f2f1;border-top:1px solid #c8c8c8;box-sizing:border-box;display:flex;align-items:center;font-size:11px;color:#555}
  .sl{margin-left:8px;width:1150px}
  .numlock{width:69px}
  .stf{width:57px}
  .viewbtn{width:41px;height:20px;background:#c8c6c4;display:flex;align-items:center;justify-content:center}
  .viewbtn2{margin-left:11px}

  /* taskbar */
  .taskbar{height:40px;flex:none;background:#070707;display:flex;align-items:center;color:#fff}
  .tstart{width:17px;height:17px;margin-left:16px}
  .tsearch{width:344px;height:40px;margin-left:15px;background:#333;display:flex;align-items:center;flex:none;box-sizing:border-box}
  .cortana{display:block;width:20px;height:20px;box-sizing:border-box;border:3px solid #d8d8d8;border-radius:50%;margin-left:10px}
  .tsq{margin-left:10px;font-size:14px;color:#aaa;width:277px;white-space:nowrap}
  .mic{width:12px;height:18px}
  .tbi{width:49px;height:40px;display:flex;align-items:center;justify-content:center;flex:none;box-sizing:border-box;position:relative}
  .tbi svg{width:24px;height:24px}
  .tbi.tv{width:46px}
  .first-app{margin-left:4.500px}
  .tv svg{width:22px;height:15px}
  .tbi.run::after{content:"";position:absolute;left:5px;right:5px;bottom:0;height:2px;background:#6fb4e8}
  .tbi.act{background:#333}
  .tbi.act::after{content:"";position:absolute;left:0;right:0;bottom:0;height:2px;background:#6fb4e8}
  .tray{margin-left:auto;display:flex;align-items:center;height:40px}
  .up{width:12px;height:7px}
  .cl{width:16px;height:11px;margin-left:11px}
  .bat{width:16px;height:13px;margin-left:8px}
  .wifi{width:14px;height:14px;margin-left:11px}
  .vol{width:16px;height:15px;margin-left:8px}
  .clock{display:flex;flex-direction:column;align-items:center;width:56px;margin:-2px 0 0 7px;font-size:11.500px;line-height:20px;color:#eee}
  .notif{width:16px;height:16px;margin:0 25px 0 15px}
  .wl{font:700 9px "Open Sans",sans-serif;fill:#fff}
  .al{font:700 10px "Open Sans",sans-serif;fill:#fff}
</style>
